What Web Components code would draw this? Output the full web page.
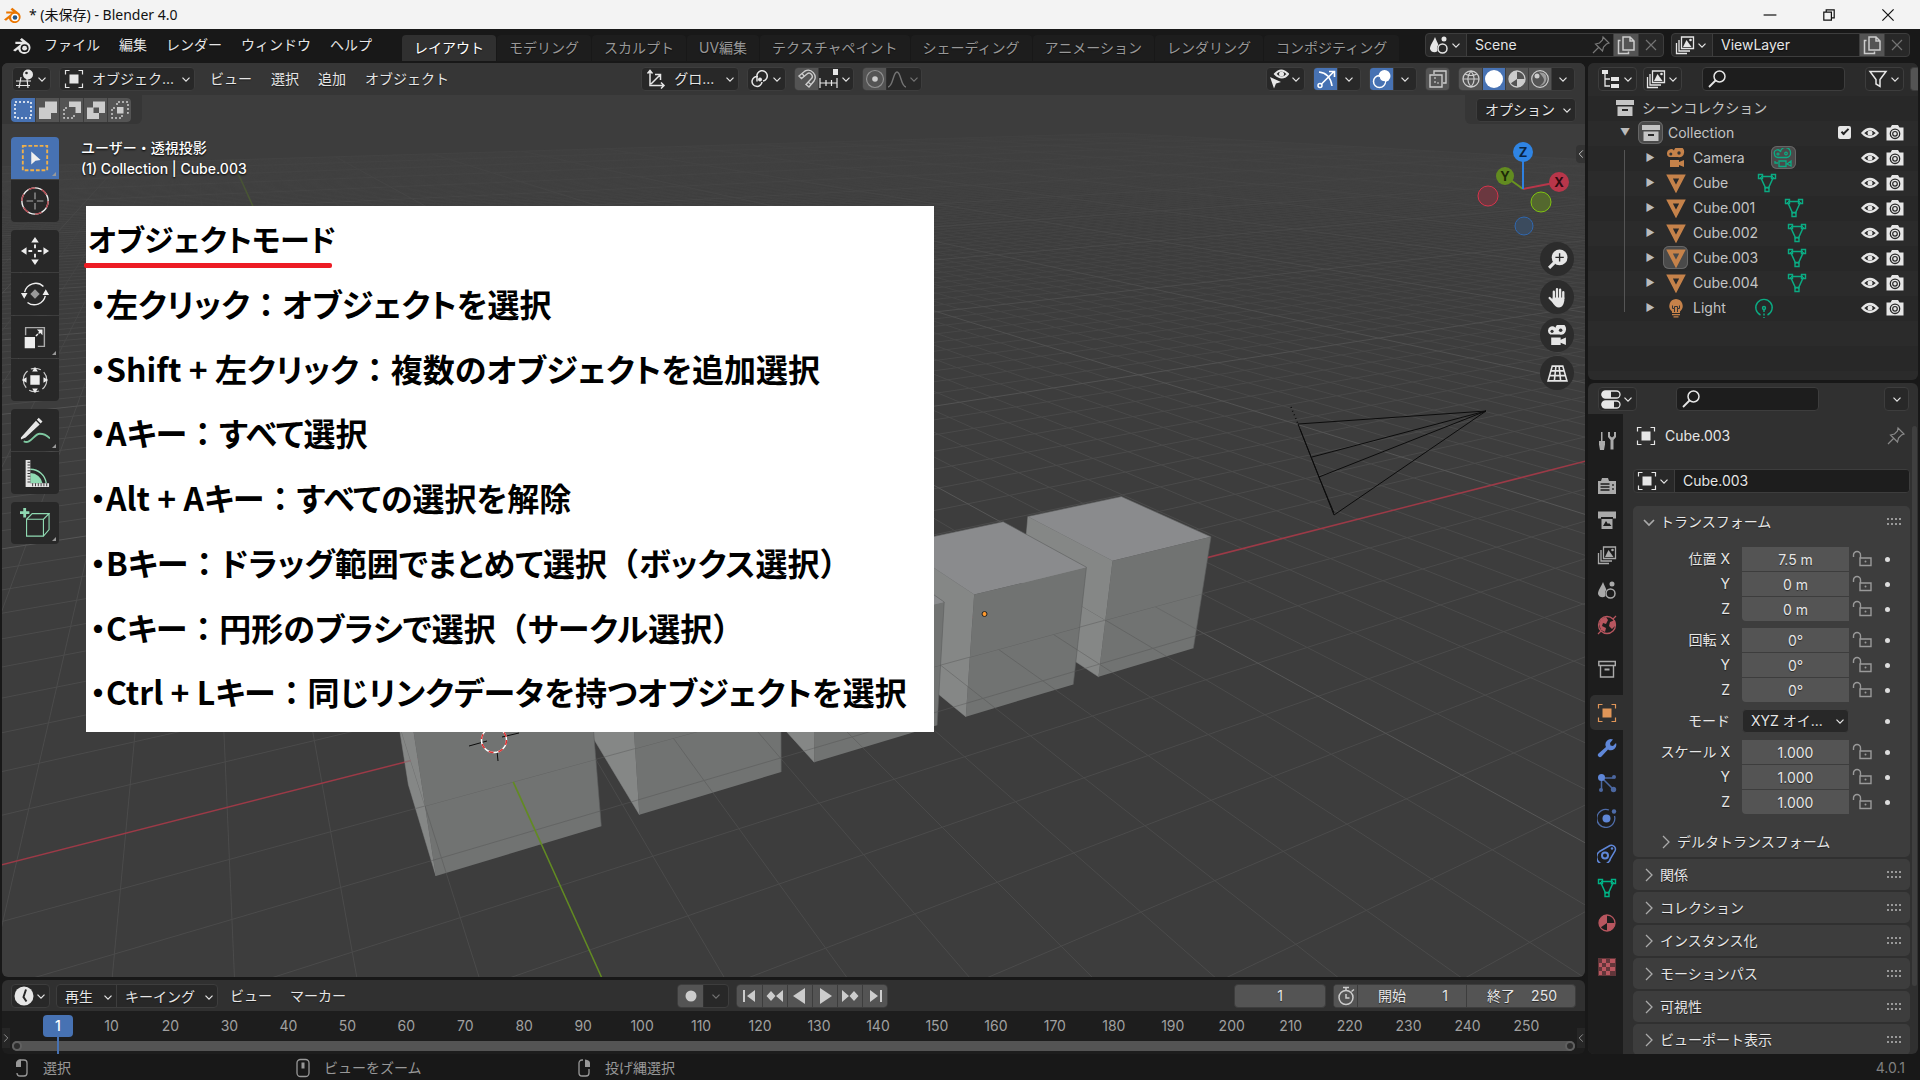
<!DOCTYPE html>
<html lang="ja">
<head>
<meta charset="utf-8">
<title>* (未保存) - Blender 4.0</title>
<style>
:root {
  --font: Inter, "Noto Sans CJK JP", sans-serif;
  --base: #181818;
  --dark: #1d1d1d;
  --button: #282828;
  --field: #545454;
  --header: #303030;
  --outline: #3d3d3d;
  --text: #e6e6e6;
  --accent: #4772b3;
  --orange: #e19658;
  --green: #00b386;
}
body {
  margin: 0;
  background: var(--base);
  color: var(--text);
  font: 14px/20px var(--font);
}
</style>
</head>
<body>
<blender-window></blender-window>
<script>
// 20x20 glyphs, drawn with the current text colour
var line = (d, w = 1.5, more = "") => `<path d="${d}" fill="none" stroke="currentColor" stroke-width="${w}" ${more}/>`;
var fill = (d, more = "") => `<path d="${d}" fill="currentColor" ${more}/>`;
var ring = (x, y, r, w = 1.5) => `<circle cx="${x}" cy="${y}" r="${r}" fill="none" stroke="currentColor" stroke-width="${w}"/>`;
var dot = (x, y, r) => `<circle cx="${x}" cy="${y}" r="${r}" fill="currentColor"/>`;

var reel = fill("M1 5a4 4 0 0 1 7-2.500a5 5 0 0 1 10 2.500a4.500 4.500 0 0 1-6 4H3a4 4 0 0 1-2-4zM4 12h9v2l5-2v7l-5-2v2H4z");
var logo = (eye) => `
  <path d="M1 14.500L8.500 8.500H3.200V6.500H10L7.500 4.500L9.300 2.800L16.500 8.500A6 6 0 1 1 5.800 13.500L3 15.700z" fill="currentColor"/>
  <circle cx="12" cy="12.500" r="3.800" fill="${eye[0]}"/><circle cx="12" cy="12.500" r="2.300" fill="${eye[1]}"/>`;

var icons = {
  logo: logo(["#181818", "#e6e6e6"]),
  brand: logo(["#fff", "#265787"]),
  down: line("M5 8l5 5L15 8", 1.700),
  right: line("M7 4l6 6l-6 6", 1.300),
  left: line("M13 4l-6 6l6 6", 1.300),
  min: line("M2 10h16", 1.500),
  restore: line("M3.500 6.500h9.500v10H3.500zM6.500 6V3.500h10v10H13.500", 1.500),
  close: line("M3 3l14 14M17 3L3 17", 1.500),
  x: line("M5 5l10 10M15 5L5 15", 1.200),
  view: line("M1 12h15M1 16.500h14M6 8l-2 11M12 10l1 9", 1.200) + dot(13, 5.500, 5) + `<circle cx="11.500" cy="4" r="1.300" fill="#282828"/>`,
  object: fill("M5.500 5.500h9v9h-9z") + line("M1.500 5.500v-4h4M14.500 1.500h4v4M18.500 14.500v4h-4M5.500 18.500h-4v-4", 1.200),
  orient: line("M4 1.500v15h14M1.500 4.500L4 1.500l2.500 3M15 13.500l3 3l-3 3M5 15L14 6M9 5.500h5.500V11", 1.500),
  pivot: line("M8 7.500a5 5 0 1 0 4 5.500M7 12.500V8a5.200 5.200 0 1 1 6 4", 1.500) + dot(10, 10.500, 2),
  magnet: line("M2 7l6-5a7 7 0 0 1 9 10l-5 6l-3-2.500l5-5.500a3.200 3.200 0 0 0-4-5L4.500 9.500z", 1.400) + line("M5 4.500l2.500 3M14 15.500l-3-2.500", 1.200),
  snap: line("M1 9v10M7 11v6M12.500 11v6M18 9v10M1 14h17", 1.200) + fill("M14 0h5v6h-5z"),
  falloff: `<g opacity=".5">` + ring(10, 10, 8.500, 1.200) + "</g>" + dot(10, 10, 2.800),
  curve: line("M1 18c5 0 5-15 9-15s4 15 9 15", 1.500),
  visible: `<path d="M6 5q6-7 13 0q-6 7-13 0z" fill="none" stroke="currentColor" stroke-width="2"/>` + dot(12.500, 5, 2.500) + fill("M1 8l11 5l-5 1.500l-2 5z"),
  gizmo: line("M3 3q11 1 13 14M5 15.500L17.500 3M13 2.500h5.500V8", 1.600) + ring(4, 16.500, 2, 1.500),
  overlay: dot(12.500, 7, 6) + ring(7.500, 12.500, 6, 1.500) + `<path d="M7 8a6 6 0 0 0 6 5" fill="none" stroke="#4772b3" stroke-width="1.500"/>`,
  xray: line("M2 6h12v12H2zM6 5V2h12v12h-3", 1.400) + line("M7 8v6h5", 1.200, 'stroke-dasharray="2 2"'),
  wire: ring(10, 10, 8, 1.300) + line("M2 10h16M10 2c-4 5-4 11 0 16M10 2c4 5 4 11 0 16M4 5q6 3 12 0", 1.200),
  solid: dot(10, 10, 9),
  shaded: ring(10, 10, 8, 1.300) + fill("M10 10V2a8 8 0 0 0-6.500 12.500zM10 10h8a8 8 0 0 1-8 8z"),
  rendered: ring(10, 10, 8.300, 1.200) + fill("M9 3.500q8-1 7.500 6.500q-1 6-7 7q6-4 4-8q-2-3-4.500-5.500z", 'opacity=".6"') + dot(7, 7, 2.500),
  pin: line("M12 2l6 6l-2.500 1l-3 3l-1 4l-7-7l4-1l3-3zM7.500 12.500L2 18", 1.200),
  copy: line("M7 2h7l4 4v9H7zM14 2v4h4", 1.500) + line("M4.500 5.500H2.500v13h10v-2", 1.500),
  scene: fill("M6 2c2 5 4 8 4 11c-1 6-8 5-9 1c0-4 3-7 5-12zM15 1.500a2.500 2.500 0 1 1 0 5a2.500 2.500 0 0 1 0-5z") + `<circle cx="13.500" cy="13.500" r="5.500" fill="var(--icon-back, #282828)"/>` + ring(13.500, 13.500, 4.500, 1.500),
  layers: line("M6.500 2h12v11.500h-12zM4 5v11h11M1.500 8v10.500H12", 1.300) + fill("M8 12l3.500-7l5 7z") + dot(15.500, 5, 1.300),
  outliner: fill("M1 1h6v4H1zM10 8h8v4h-8zM10 15h8v4h-8z") + line("M4 5v12h5M4 10h5", 1.300),
  search: ring(12.500, 7.500, 5.500, 1.500) + line("M8.500 11.500L2 18", 1.800),
  filter: line("M2 2.500h16l-6 8v7l-4-2.500v-4.500z", 1.500),
  archive: fill("M1 2h18v5H1zM2.500 8.500h15V18h-15z") + `<path d="M7 11h6v2H7z" fill="#282828"/>`,
  archive2: line("M1.800 2.500h16.500v4H1.800zM3.500 6.500h13v11.500h-13z", 1.400) + fill("M7.500 9.500h5v2h-5z"),
  eye: `<path d="M2.500 10Q10 2 17.500 10Q10 18 2.500 10z" fill="none" stroke="currentColor" stroke-width="2.300"/>` + dot(10, 10, 2.500),
  photo: fill("M1.500 4.500h4l1.500-2.500h6l1.500 2.500h4v13h-17z") + `<circle cx="10" cy="10.800" r="4.700" fill="none" stroke="#282828" stroke-width="1.300"/><circle cx="10" cy="10.800" r="2.300" fill="none" stroke="#282828" stroke-width="1.200"/>`,
  movie: reel + `<g fill="#333"><circle cx="4.800" cy="6" r="1.500"/><circle cx="13" cy="5" r="1.700"/></g>`,
  movieline: line("M1.500 6a3 3 0 0 1 6-2a4.500 4.500 0 0 1 10 1a4 4 0 0 1-4 4.500H5a3.300 3.300 0 0 1-3.500-3.500zM6 13h7v5.500H6zM14 16l4-3v5zM2 13v2h3", 1.300) + ring(5, 6, 1, 1.200) + ring(13, 5.500, 1.300, 1.200),
  cube: `<path d="M3.500 3.500h13L10 16z" fill="none" stroke="currentColor" stroke-width="4"/>`,
  mesh: line("M3.500 4L9 16M16.500 4L11 16M4 3.500h12", 1.500) + line("M1.500 1.500h4v4h-4zM14.500 1.500h4v4h-4zM8 14.500h4v4H8z", 1.400),
  bulb: fill("M10 1a7 7 0 0 1 4 12.500V15H6v-1.500A7 7 0 0 1 10 1zM6 16h8v1.200H6zM7.500 18.300h5v1.200h-5z") + `<path d="M6.500 7.500v3h2V8.500h3v2h2v-3M8.500 10.500V14M11.500 10.500V14" fill="none" stroke="#333" stroke-width="1"/>`,
  lamp: line("M6.500 17A8.200 8.200 0 1 1 13.500 17", 1.400) + ring(10, 10, 1.500, 1.400) + line("M10 12v8", 1.500, 'stroke-dasharray="2 1.500"'),
  tools: fill("M4 1h1.500v9H8v3.500l-1 5.500H3l-1-5.500V10h2zM11 1v5l2.500 3v9.500h3V9L19 6V1h-2v4l-2 1.500L13 5V1z"),
  render: fill("M1 6h3l1-3h6l1 3h7v13H1z") + `<path d="M3.500 9h9M3.500 12h9M3.500 15h9M16 9v2M16 13v2" stroke="#1d1d1d" stroke-width="1.300"/>`,
  output: fill("M1 1.500h18v7h-3V7H4v1.500H1zM4.500 9h11v10h-11z") + `<path d="M6 16l3-5l2 3l1-1l2.500 3z" fill="#1d1d1d"/>`,
  world: ring(10, 10, 8.500, 1.300) + fill("M4 4l5-2l2 3l-2 4l-3-1l-1 3l4 2l-1 4l-4-2l-2-6zM13 7l5-2l1 5l-4 4l-3-3z") + line("M1 19l3-3M16 4l3-3", 1.200),
  wrench: fill("M1.500 15.500L9 9a5.500 5.500 0 0 1 7-7.500L13 5l.500 2.500L16 8l3-3a5.500 5.500 0 0 1-8 6.500L4.500 18.500a2.100 2.100 0 0 1-3-3z"),
  particles: dot(4.500, 4.500, 3.500) + `<g opacity=".7">` + dot(17, 4, 2) + dot(4, 17, 2) + dot(16.500, 16.500, 2.700) + line("M5 5h11M4.500 5v12M5 5l11 11") + "</g>",
  physics: dot(9.500, 10.500, 4) + `<g opacity=".75">` + line("M12 2a9 9 0 1 0 5.500 6", 1.300) + dot(17, 3.500, 2.200) + "</g>",
  constraint: line("M2.500 8.500L13 2.500a4 4 0 0 1 5 5.500L13.500 15.500A7 7 0 1 1 2.500 8.500z", 1.500) + ring(8, 12.500, 3, 2) + dot(15, 5.500, 1.200),
  checker: fill("M1 1h18v18H1z", 'opacity=".45"') + fill("M5 2h4v4H5zM13 2h5v4h-5zM2 6h3v4H2zM9 6h4v4H9zM5 10h4v4H5zM13 10h5v4h-5zM2 14h3v4H2zM9 14h4v4H9z"),
  lock: line("M8 9h11v7.500H8zM1.500 8V6a3.500 3.500 0 0 1 7 0v3", 1.400) + dot(13.500, 12.500, 1),
  props: `<rect x="1" y="2" width="18" height="7" rx="3.500" fill="none" stroke="currentColor" stroke-width="1.300"/><rect x="1" y="12" width="18" height="7" rx="3.500" fill="none" stroke="currentColor" stroke-width="1.300"/>` + fill("M4 2h6v7H4a3 3 0 0 1 0-7zM4 12h9v7H4a3 3 0 0 1 0-7z"),
  clock: dot(10, 10, 9.500) + `<path d="M12 3.500L9.500 11l3 4.500" fill="none" stroke="#282828" stroke-width="2"/>`,
  stopwatch: ring(10, 11.500, 7, 1.500) + line("M10 8v4h3.500M7 1.500h6M10 2v3M15.500 5.500L18 3.500", 1.500),
  record: dot(10, 10, 5.500),
  first: fill("M3 4h2v12H3zM15 4v12l-8-6z"),
  prevkey: fill("M6 5l4.500 5L6 15L1.500 10zM18 4v12l-7-6z"),
  prev: fill("M15 2v16L3 10z"),
  play: fill("M5 2v16l12-8z"),
  nextkey: fill("M14 5l4.500 5l-4.500 5L9.500 10zM2 4v12l7-6z"),
  last: fill("M15 4h2v12h-2zM5 4v12l8-6z"),
  mouseL: line("M5 5a3 3 0 0 1 3-3h4a3 3 0 0 1 3 3v10a3 3 0 0 1-3 3H8a3 3 0 0 1-3-3", 1.300) + fill("M4 9V5q0-3 5-3.500V9z"),
  mouseM: `<rect x="4" y="1.500" width="12" height="17" rx="3.500" fill="none" stroke="currentColor" stroke-width="1.300"/>` + fill("M8.500 4.500h3v6h-3z"),
  mouseR: line("M15 11v4a3 3 0 0 1-3 3H8a3 3 0 0 1-3-3V5a3 3 0 0 1 3-3h1", 1.300) + fill("M16 9V5q0-3-5-3.500V9z"),
  selset: line("M2 2h16v16H2z", 1.500, 'stroke-dasharray="2 2"'),
  seladd: fill("M7 1.500h12V13h-6v6H1V7.500h6z"),
  selsub: fill("M7 1.500h12V13h-5.500V7H7z") + line("M5 8H2v10h10v-3", 1.500, 'stroke-dasharray="2 2"'),
  seldiff: fill("M7 1.500h12V13h-6v6H1V7.500h6zM7.500 7.500V13H13V7.500z", 'fill-rule="evenodd"'),
  seland: fill("M7 7h6.500v6.500H7z") + line("M7 5V2h11v11h-3M5 8H2v10h10v-3", 1.500, 'stroke-dasharray="2 2"'),
  zoom: dot(12, 8, 7.500) + line("M7 13L2 18", 3) + `<path d="M12 4v8M8 8h8" stroke="#2a2a2a" stroke-width="1.300"/>`,
  hand: line("M6.500 11V4.500M9.500 10V2M12.500 10V2.500M15.500 11V5M7 15L2.500 10.500", 2.200, 'stroke-linecap="round"') + fill("M5.500 10h11v3q-1 6-5 6.500q-4 0-7-6.500z"),
  grid: line("M5 3h10l4 14H1zM4 7.500h12M3 12h14M8.500 3L7 17M11.500 3L13 17", 1.500),
};

// 32x32 glyphs for the tool shelf
var toolIcons = {
  select: `<rect x="3" y="3" width="26" height="26" fill="none" stroke="#f0b04a" stroke-width="2" stroke-dasharray="4 2"/><path d="M12 9l10 9l-5.500 1L12 23z" fill="#eee"/>`,
  cursor: `<circle cx="16" cy="16" r="14" fill="none" stroke="#eee" stroke-width="1.500"/><circle cx="16" cy="16" r="14" fill="none" stroke="#b0454c" stroke-width="1.500" stroke-dasharray="7.300 7.300"/><path d="M16 7v7M16 18v7M7 16h7M18 16h7" stroke="#aaa" stroke-width="1.200"/>`,
  move: `<path d="M16 1l4 6h-8zM16 31l4-6h-8zM1 16l6-4v8zM31 16l-6-4v8z" fill="#eee"/><path d="M16 9v4M16 19v4M9 16h4M19 16h4" stroke="#eee" stroke-width="2"/>`,
  rotate: `<path d="M5 14A12 12 0 0 1 25 8M27 18A12 12 0 0 1 8 25" fill="none" stroke="#eee" stroke-width="1.500"/><path d="M1 15h7l-3.500 6zM24 17h7l-3.500-6z" fill="#eee"/><path d="M16 11l5 5l-5 5l-5-5z" fill="#999"/>`,
  scale: `<path d="M6 14V6h20v20h-7" fill="none" stroke="#aaa" stroke-width="1.500"/><path d="M5 16h11v12H5z" fill="#eee"/><path d="M17 15l5-5" stroke="#eee" stroke-width="1.500" stroke-dasharray="3 1"/><path d="M24 8v6l-6-6z" fill="#eee"/>`,
  transform: `<circle cx="16" cy="16" r="12.500" fill="none" stroke="#ccc" stroke-width="1.300" stroke-dasharray="11 4 11 4 9 0"/><path d="M11 11h10v10H11zM16 2l3 5h-6zM16 30l3-5h-6zM2 16l5-3v6zM30 16l-5-3v6z" fill="#eee"/>`,
  annotate: `<path d="M1 24L17 6l4 4L6 24l-5 2zM18 5l2-2l4 4l-2 2z" fill="#e6e6e6"/><path d="M4 28c7 4 11-8 17-8q6 0 11 5" fill="none" stroke="#7ec8a0" stroke-width="2"/>`,
  measure: `<path d="M11 12a17 17 0 0 1 17 15" fill="none" stroke="#8fdab2" stroke-width="1.500"/><path d="M11 16a13 13 0 0 1 13 11H11z" fill="#8fdab2"/><path d="M6 2h5v25h20v4H6z" fill="#e6e6e6"/><path d="M9.500 4v22M13 28.500h17" stroke="#333" stroke-width="3" stroke-dasharray="1 2"/>`,
  add: `<path d="M7 12h18v18H7zM7 12l6-6h18l-6 6M31 6v17l-6 7" fill="none" stroke="#8fdab2" stroke-width="1.200"/><path d="M5 0v10M0 5h10" stroke="#8fdab2" stroke-width="3"/>`,
};

var shared = `
*, *::before { box-sizing: border-box; }
button, select, input {
  margin: 0; padding: 0; border: 0; background: none;
  color: inherit; font: inherit; outline: 0;
  text-shadow: 0 1px 1px #0008;
}
button { display: flex; align-items: center; justify-content: center; }
.row { display: flex; align-items: center; }
.group {
  display: flex; height: 24px; overflow: hidden;
  border: 1px solid var(--outline); border-radius: 4px; background: var(--button);
}
.group > * + * { border-left: 1px solid var(--outline); }
.group button { min-width: 23px; }
.group .lit { background: var(--field); color: #ccc; }
.group .on { background: var(--accent); color: #fff; }
.dim { opacity: .4; }
`;

class UiElement extends HTMLElement {
  constructor() {
    super();
    this.attachShadow({ mode: "open" });
  }

  connectedCallback() {
    this.shadowRoot.innerHTML = `<style>${shared}${this.constructor.css || ""}</style>${this.render()}`;
  }
}

class UiIcon extends UiElement {
  static css = `
    :host { display: inline-block; width: 20px; height: 20px; flex: none; }
    svg { display: block; width: 100%; height: 100%; }
  `;
  render() {
    return `<svg viewBox="0 0 20 20">${icons[this.getAttribute("name")]}</svg>`;
  }
}

// icon button that opens a menu
class UiDrop extends UiElement {
  static css = `
    :host { display: block; flex: none; }
    .group { width: 39px; }
    button { flex: 1; }
    .arrow { width: 14px; height: 14px; }
  `;
  render() {
    var name = this.getAttribute("icon");
    return `<div class="group"><button aria-label="${name}"><ui-icon name="${name}"></ui-icon><ui-icon class="arrow" name="down"></ui-icon></button></div>`;
  }
}

class UiSelect extends UiElement {
  static css = `
    :host { display: block; }
    .group { position: relative; align-items: center; padding-left: 4px; }
    :host([icon=""]) .group, :host(:not([icon])) .group { padding-left: 8px; }
    :host([plain]) .group { border: 0; border-radius: 0; background: none; }
    .lead { margin-right: 8px; }
    select { appearance: none; flex: 1; min-width: 0; padding-right: 16px; border: 0 !important; }
    .arrow { position: absolute; right: 1px; width: 14px; height: 14px; border: 0 !important; pointer-events: none; }
    option { background: #181818; }
  `;
  render() {
    var icon = this.getAttribute("icon");
    return `<div class="group">
      ${icon ? `<ui-icon class="lead" name="${icon}"></ui-icon>` : ""}
      <select aria-label="${this.getAttribute("label")}"><option>${this.textContent}</option></select>
      <ui-icon class="arrow" name="down"></ui-icon>
    </div>`;
  }
}

class UiSearch extends UiElement {
  static css = `
    :host { display: block; width: 143px; }
    label { display: flex; align-items: center; height: 24px; padding: 0 4px; border: 1px solid var(--outline); border-radius: 4px; background: var(--dark); }
    input { width: 100%; }
  `;
  render() {
    return `<label><ui-icon name="search"></ui-icon><input type="text" aria-label="検索"></label>`;
  }
}

// data-block picker: type menu, name, new, unlink
class UiDatablock extends UiElement {
  static css = `
    :host { display: block; }
    .group button { flex: none; width: 25px; }
    .group .type { width: 40px; }
    .type .arrow { width: 14px; height: 14px; }
    input { flex: 1; width: 100%; min-width: 0; padding-left: 8px; background: var(--dark); }
    .pin { background: var(--dark); border: 0; color: #777; }
  `;
  render() {
    var full = !this.hasAttribute("simple");
    return `<div class="group">
      <button class="type" aria-label="type"><ui-icon name="${this.getAttribute("icon")}"></ui-icon><ui-icon class="arrow" name="down"></ui-icon></button>
      <input type="text" aria-label="name" value="${this.getAttribute("value")}">
      ${this.hasAttribute("pin") ? `<button class="pin" aria-label="pin"><ui-icon name="pin"></ui-icon></button>` : ""}
      ${full ? `<button class="lit" aria-label="new"><ui-icon name="copy"></ui-icon></button><button aria-label="unlink"><ui-icon class="dim" name="x"></ui-icon></button>` : ""}
    </div>`;
  }
}

class TitleBar extends UiElement {
  static css = `
    :host { display: flex; align-items: center; height: 29px; padding: 0 24px 0 3px; background: #f3f3f3; color: #111; font-family: "Noto Sans", "Noto Sans CJK JP", sans-serif; }
    span { margin-left: 6px; }
    .brand { color: #ea7600; }
    nav { display: flex; gap: 43px; margin-left: auto; }
    nav button { text-shadow: none; }
    nav ui-icon { width: 16px; height: 16px; }
  `;
  render() {
    return `<ui-icon class="brand" name="brand"></ui-icon><span>* (未保存) - Blender 4.0</span>
    <nav>${["min", "restore", "close"].map(n => `<button aria-label="${n}"><ui-icon name="${n}"></ui-icon></button>`).join("")}</nav>`;
  }
}

class TopBar extends UiElement {
  static css = `
    :host { display: flex; height: 34px; padding: 0 10px 0 12px; align-items: flex-start; }
    .logo { width: 21px; height: 21px; margin-top: 6px; }
    .menus { gap: 19px; height: 32px; padding: 0 30px 0 11px; }
    .tabs { display: flex; flex: 1; gap: 1px; min-width: 0; overflow: hidden; padding-top: 6px; }
    .tabs button { height: 26px; padding: 0 12px; border-radius: 4px 4px 0 0; background: var(--dark); color: #989898; white-space: nowrap; }
    .tabs .on { background: var(--header); color: #fff; }
    ui-datablock { margin: 4px 0 0 7px; width: 239px; }
  `;
  render() {
    var menus = ["ファイル", "編集", "レンダー", "ウィンドウ", "ヘルプ"];
    var tabs = ["レイアウト", "モデリング", "スカルプト", "UV編集", "テクスチャペイント", "シェーディング", "アニメーション", "レンダリング", "コンポジティング"];
    return `<ui-icon class="logo" name="logo"></ui-icon>
    <div class="menus row">${menus.map(m => `<button>${m}</button>`).join("")}</div>
    <div class="tabs">${tabs.map((t, i) => `<button class="${i ? "" : "on"}">${t}</button>`).join("")}</div>
    <ui-datablock icon="scene" value="Scene" pin></ui-datablock>
    <ui-datablock icon="layers" value="ViewLayer"></ui-datablock>`;
  }
}

// perspective of the scene: a row of cubes standing on the 1 m floor grid
class SceneView extends UiElement {
  static css = `
    :host { display: block; position: absolute; inset: 0; }
    svg { display: block; width: 100%; height: 100%; }
  `;

  depth(x, y, z) {
    return 13.64 + 0.4216 * x + 0.826 * y - 0.3741 * z;
  }

  project(x, y, z) {
    var right = -3.7456 + 0.8937 * x - 0.4526 * y;
    var up = -2.744 + 0.1725 * x + 0.3332 * y + 0.917 * z;
    var d = this.depth(x, y, z);
    return [791.5 + 1090.5 * right / d, 457 - 1090.5 * up / d].map(n => n.toFixed(1)).join(" ");
  }

  // floor line at x = k or y = k, cut where it passes behind the viewer
  floorLine(axis, k, far) {
    var near = axis == "x" ? (-12.6 - 0.4216 * k) / 0.826 : (-12.6 - 0.826 * k) / 0.4216;
    var from = Math.max(near, -far);
    var points = [from, far].map(t => axis == "x" ? this.project(k, t, 0) : this.project(t, k, 0));
    return `M${points.join("L")}`;
  }

  grid() {
    var minor = "";
    var major = "";
    for (var k = -80; k <= 120; k++) {
      if (k == 0) continue;
      var d = "";
      if (this.depth(k, 120, 0) > 1) d += this.floorLine("x", k, 120);
      if (this.depth(120, k, 0) > 1) d += this.floorLine("y", k, 120);
      if (k % 10) minor += d;
      else major += d;
    }
    return `
      <path d="${minor}" stroke="#4b4b4b"/>
      <path d="${major}" stroke="#575757"/>
      <path d="${this.floorLine("y", 0, 120)}" stroke="#9c3a47" stroke-width="1.5"/>
      <path d="${this.floorLine("x", 0, 120)}" stroke="#628b22" stroke-width="1.5"/>`;
  }

  cube(cx) {
    var [l, r] = [cx - 1, cx + 1];
    var poly = (...p) => "M" + p.map(c => this.project(...c)).join("L") + "Z";
    var under = poly([l, 1, -1], [l, -1, -1], [r, -1, -1], [r, -1, 0], [l, -1, 0], [l, 1, 0]);
    var id = "under" + cx * 10;
    return `
      <path d="${poly([l, 1, -1], [l, -1, -1], [l, -1, 1], [l, 1, 1])}" fill="#858786" stroke="#858786" stroke-width=".5"/>
      <path d="${poly([l, -1, -1], [r, -1, -1], [r, -1, 1], [l, -1, 1])}" fill="#717372"/>
      <path d="${poly([l, -1, 1], [r, -1, 1], [r, 1, 1], [l, 1, 1])}" fill="#8a8b8d"/>
      <path d="M${this.project(l, 1, 1)}L${this.project(r, 1, 1)}L${this.project(r, -1, 1)}L${this.project(r, -1, -1)}" fill="none" stroke="#5c5e5d" stroke-opacity=".6"/>
      <clipPath id="${id}"><path d="${under}"/></clipPath>
      <g clip-path="url(#${id})"><use href="#floor" opacity=".35"/>
      <path d="${this.floorLine("x", 0, 120)}" stroke="#628b22" stroke-width="1.5"/></g>`;
  }

  render() {
    return `<svg viewBox="0 0 1583 914" preserveAspectRatio="xMidYMid slice">
      <defs>
        <linearGradient id="haze" gradientUnits="userSpaceOnUse" x1="0" y1="0" x2="0" y2="914">
          <stop offset=".03" stop-color="#000"/><stop offset=".12" stop-color="#444"/>
          <stop offset=".3" stop-color="#bbb"/><stop offset=".45" stop-color="#fff"/>
        </linearGradient>
        <mask id="fade" maskUnits="userSpaceOnUse" x="0" y="0" width="1583" height="914"><path d="M0 0h1583v914H0z" fill="url(#haze)"/></mask>
      </defs>
      <path d="M-500 -500h3000v2000h-3000z" fill="#3d3d3d"/>
      <g mask="url(#fade)"><g id="floor" fill="none">${this.grid()}</g></g>
      ${[10, 7.5, 5, 2.5, 0].map(x => this.cube(x)).join("")}
      <g fill="none" stroke="#0c0c0c">
        <path d="M1296 361L1484 348L1310 394M1484 348L1317 414M1484 348L1332 452L1296 361M1298 366L1317 414L1332 450"/>
        <path d="M1289 344l7 17" stroke-dasharray="1 3" stroke-width="1.5"/>
        <path d="M467 683l18-5M500 674l17-4M495 688l1 10M492 661l-2-10"/>
      </g>
      <circle cx="492" cy="677" r="12.500" fill="none" stroke="#fff" stroke-width="1.500"/>
      <circle cx="492" cy="677" r="12.500" fill="none" stroke="#e03030" stroke-width="1.500" stroke-dasharray="5 5"/>
      <circle cx="982.500" cy="551" r="2.500" fill="#ff9a2e" stroke="#222"/>
    </svg>`;
  }
}

class AxisGizmo extends UiElement {
  static css = `
    :host { display: block; width: 100px; height: 101px; }
    text { font: bold 13px Inter, sans-serif; text-anchor: middle; }
  `;
  render() {
    return `<svg width="100" height="101">
      <g stroke-width="2"><path d="M50 52L86 45" stroke="#b8364a"/><path d="M50 52L32 39" stroke="#6a9420"/><path d="M50 52V15" stroke="#2f80e0"/></g>
      <circle cx="15" cy="59" r="10" fill="#6b3840" stroke="#d8344c"/>
      <circle cx="68" cy="65" r="10" fill="#54682e" stroke="#80c410"/>
      <circle cx="51" cy="89" r="9" fill="#3b4b5e" stroke="#3068b0"/>
      <circle cx="32" cy="39" r="9" fill="#628b20"/><circle cx="86" cy="45" r="10" fill="#b8364a"/><circle cx="50" cy="15" r="10" fill="#2f84e3"/>
      <text x="32" y="44" fill="#1d2a08">Y</text><text x="86" y="50" fill="#300a10">X</text><text x="50" y="20" fill="#0a2340">Z</text>
    </svg>`;
  }
}

class ToolShelf extends UiElement {
  static css = `
    :host { display: grid; gap: 8px; width: 48px; align-content: start; }
    div { display: grid; gap: 1px; border-radius: 4px; overflow: hidden; }
    button { position: relative; height: 42px; background: var(--button); }
    .on { background: var(--accent); }
    .more::after { content: ""; position: absolute; right: 3px; bottom: 3px; border: solid; border-width: 0 0 4px 4px; border-color: transparent transparent #999; }
    svg { width: 30px; height: 30px; }
  `;
  render() {
    var groups = [["select+", "cursor"], ["move", "rotate", "scale+", "transform"], ["annotate+", "measure"], ["add+"]];
    return groups.map(g => `<div>${g.map(t => {
      var name = t.replace("+", "");
      return `<button aria-label="${name}" class="${name == "select" ? "on" : ""} ${name == t ? "" : "more"}"><svg viewBox="0 0 32 32">${toolIcons[name]}</svg></button>`;
    }).join("")}</div>`).join("");
  }
}

class NoteCard extends UiElement {
  static css = `
    :host {
      display: flex; flex-direction: column; width: 848px; height: 526px; padding: 0 2px 8px;
      background: #fff; color: #000;
      font: bold 32px/64px "Noto Sans CJK JP", sans-serif; font-feature-settings: "palt"; white-space: nowrap;
    }
    h2 { position: relative; flex: 1; margin: 0; font: inherit; font-size: 30px; }
    h2::after { content: ""; position: absolute; left: -4px; bottom: 3px; width: 248px; height: 5px; border-radius: 2px; background: #ed1c24; }
    ul { flex: 7; display: flex; flex-direction: column; list-style: none; margin: 0; padding: 0; }
    ::slotted(li) { flex: 1; padding-left: 2px; }
  `;
  render() {
    return `<h2>${this.getAttribute("heading")}</h2><ul><slot></slot></ul>`;
  }
}

class View3d extends UiElement {
  static css = `
    :host { display: flex; flex-direction: column; position: relative; overflow: hidden; border-radius: 6px; min-height: 0; }
    header { position: relative; display: flex; align-items: center; height: 32px; padding: 0 10px; background: #363636; }
    header .row { gap: 8px; }
    .menus { padding-left: 15px; gap: 19px !important; }
    .s1 { flex: 19; } .s2 { flex: 34; }
    ui-select.mode { width: 136px; } ui-select.orient { width: 98px; }
    .settings { position: relative; display: flex; justify-content: space-between; height: 29px; }
    .bump { height: 29px; padding: 3px 11px 3px 9px; background: #363636; border-radius: 0 0 6px 0; }
    .bump + .bump { border-radius: 0 0 0 6px; padding: 3px 9px 3px 11px; }
    .bump + .bump ui-select { width: 100px; }
    .bump .group { border: 0; }
    .bump button { min-width: 24px; }
    .body { position: relative; display: flex; flex: 1; padding: 13px 10px 0 9px; }
    .info { margin: 0 0 0 22px; font-weight: 500; line-height: 21px; color: #fff; text-shadow: 0 1px 2px #000; }
    .arrow14 { width: 14px; height: 14px; }
    aside { margin-left: auto; display: flex; flex-direction: column; align-items: flex-end; gap: 4px; }
    axis-gizmo { margin: 0 2px 0 0; }
    aside button { width: 34px; height: 34px; margin-right: 1px; border-radius: 50%; background: #2c2c2c; }
    aside button ui-icon { width: 21px; height: 21px; }
    note-card { position: absolute; left: 84px; top: 143px; }
    li i { font-style: normal; font-feature-settings: normal; }
    .flap { position: absolute; right: 0; top: 82px; width: 9px; height: 18px; background: #333; border-radius: 4px 0 0 4px; }
    .flap ui-icon { width: 12px; height: 14px; }
  `;
  render() {
    var b = (name, cls = "") => `<button class="${cls}" aria-label="${name}"><ui-icon name="${name}"></ui-icon></button>`;
    var d = `<button aria-label="options"><ui-icon class="arrow14" name="down"></ui-icon></button>`;
    return `<scene-view></scene-view>
    <header>
      <div class="row"><ui-drop icon="view"></ui-drop><ui-select class="mode" icon="object" label="mode">オブジェク...</ui-select></div>
      <div class="row menus"><button>ビュー</button><button>選択</button><button>追加</button><button>オブジェクト</button></div>
      <span class="s1"></span>
      <div class="row">
        <ui-select class="orient" icon="orient" label="orientation">グロ...</ui-select>
        <ui-drop icon="pivot"></ui-drop>
        <div class="group">${b("magnet", "lit")}<button aria-label="snap"><ui-icon name="snap"></ui-icon><ui-icon class="arrow14" name="down"></ui-icon></button></div>
        <div class="group">${b("falloff", "lit")}<button class="dim" aria-label="curve"><ui-icon name="curve"></ui-icon><ui-icon class="arrow14" name="down"></ui-icon></button></div>
      </div>
      <span class="s2"></span>
      <div class="row">
        <ui-drop icon="visible"></ui-drop>
        <div class="group">${b("gizmo", "on")}${d}</div>
        <div class="group">${b("overlay", "on")}${d}</div>
        <div class="group">${b("xray", "lit")}</div>
        <div class="group">${b("wire", "lit")}${b("solid", "on")}${b("shaded", "lit")}${b("rendered", "lit")}${d}</div>
      </div>
    </header>
    <div class="settings">
      <div class="bump"><div class="group">${b("selset", "on")}${["seladd", "selsub", "seldiff", "seland"].map(n => b(n, "lit")).join("")}</div></div>
      <div class="bump"><ui-select label="options">オプション</ui-select></div>
    </div>
    <div class="body">
      <tool-shelf></tool-shelf>
      <p class="info">ユーザー・透視投影<br>(1) Collection | Cube.003</p>
      <aside><axis-gizmo></axis-gizmo>${["zoom", "hand", "movie", "grid"].map(n => b(n)).join("")}</aside>
    </div>
    <button class="flap" aria-label="sidebar"><ui-icon name="left"></ui-icon></button>
    <note-card heading="オブジェクトモード">
      <li>・左クリック<i>：</i>オブジェクトを選択</li>
      <li>・Shift + 左クリック<i>：</i>複数のオブジェクトを追加選択</li>
      <li>・Aキー<i>：</i>すべて選択</li>
      <li>・Alt + Aキー<i>：</i>すべての選択を解除</li>
      <li>・Bキー<i>：</i>ドラッグ範囲でまとめて選択<i>（</i>ボックス選択<i>）</i></li>
      <li>・Cキー<i>：</i>円形のブラシで選択<i>（</i>サークル選択<i>）</i></li>
      <li>・Ctrl + Lキー<i>：</i>同じリンクデータを持つオブジェクトを選択</li>
    </note-card>`;
  }
}

class TimeLine extends UiElement {
  static css = `
    :host { display: block; position: relative; overflow: hidden; border-radius: 6px; background: var(--dark); }
    header { display: flex; align-items: center; height: 31px; padding: 0 9px; background: var(--header); }
    header .group ui-select:first-child { width: 59px; }
    header .group ui-select:nth-child(2) { width: 101px; }
    .menus { gap: 18px; padding-left: 6px; }
    .left { width: 666px; gap: 6px; flex: none; }
    .keys { gap: 7px; margin-right: auto; }
    .keys button { min-width: 25px; }
    .ends { gap: 7px; }
    .ends .group { background: var(--field); }
    .ends label { display: flex; width: 109px; padding: 0 18px 0 20px; align-items: center; }
    .ends label span { flex: none; text-shadow: 0 1px 1px #0008; }
    .ends label input { text-align: right; width: 100%; min-width: 0; }
    .now { width: 90px; text-align: center; }
    .arrow14 { width: 14px; height: 14px; }
    .ruler { display: flex; height: 30px; align-items: center; padding: 0 29px 0 41px; color: #a0a0a0; }
    .ruler b { position: relative; width: 30px; height: 22px; margin-right: 9px; border-radius: 4px; background: var(--accent); color: #fff; font-weight: 500; line-height: 22px; text-align: center; }
    .ruler b::after { content: ""; position: absolute; left: 14px; top: 22px; width: 2px; height: 18px; background: var(--accent); }
    ol { display: grid; grid-template-columns: repeat(25, 1fr); flex: 1; list-style: none; margin: 0; padding: 0; text-align: center; }
    .bar { display: flex; justify-content: space-between; height: 10px; margin: 0 10px; border-radius: 5px; background: var(--field); }
    .bar i { width: 10px; height: 10px; border-radius: 5px; border: 2px solid #606060; background: #2c2c2c; }
    .flap { position: absolute; top: 48px; left: 0; width: 8px; height: 20px; background: #262626; }
    .flap.r { left: auto; right: 0; }
    .flap ui-icon { width: 12px; height: 14px; color: #aaa; }
  `;
  render() {
    var frames = Array.from({ length: 25 }, (_, i) => `<li>${(i + 1) * 10}</li>`).join("");
    var b = (name) => `<button class="lit" aria-label="${name}"><ui-icon name="${name}"></ui-icon></button>`;
    return `<header>
      <div class="row left">
        <ui-drop icon="clock"></ui-drop>
        <div class="group"><ui-select plain label="playback">再生</ui-select><ui-select plain label="keying">キーイング</ui-select></div>
        <div class="row menus"><button>ビュー</button><button>マーカー</button></div>
      </div>
      <div class="row keys">
        <div class="group">${b("record")}<button class="dim" aria-label="auto key"><ui-icon class="arrow14" name="down"></ui-icon></button></div>
        <div class="group">${["first", "prevkey", "prev", "play", "nextkey", "last"].map(b).join("")}</div>
      </div>
      <div class="row ends">
        <div class="group"><input class="now" type="text" aria-label="frame" value="1"></div>
        <div class="group">${b("stopwatch")}<label><span>開始</span><input type="text" value="1"></label><label><span>終了</span><input type="text" value="250"></label></div>
      </div>
    </header>
    <div class="ruler"><b>1</b><ol>${frames}</ol></div>
    <div class="bar"><i></i><i></i></div>
    <button class="flap" aria-label="channels"><ui-icon name="right"></ui-icon></button>
    <button class="flap r" aria-label="sidebar"><ui-icon name="left"></ui-icon></button>`;
  }
}

class OutlinerRow extends UiElement {
  static css = `
    :host { display: flex; align-items: center; height: 25px; padding-right: 13px; color: #c4c4c4; }
    .tri { width: 12px; font-size: 10px; line-height: 25px; text-align: center; color: #bbb; flex: none; }
    .box { display: grid; place-items: center; width: 25px; height: 23px; margin: 0 5px 0 7px; border-radius: 6px; flex: none; }
    .active { background: #4a4a4a; box-shadow: inset 0 0 0 1px #666; }
    .obj { color: #c5824a; }
    .data { color: #0bab83; margin-left: 26px; }
    .end { display: flex; align-items: center; gap: 5px; margin-left: auto; color: #e6e6e6; }
    input { appearance: none; width: 13px; height: 13px; margin-right: 4px; border-radius: 2px; background: #e6e6e6; display: grid; place-items: center; }
    input::before { content: ""; width: 8px; height: 4px; border: solid #222; border-width: 0 0 2px 2px; transform: rotate(-45deg); margin-bottom: 3px; }
  `;
  render() {
    var kind = this.getAttribute("kind");
    var root = kind == "root";
    var coll = kind == "collection";
    var indent = root ? 17 : coll ? 31 : 56;
    var icon = { root: "archive", collection: "archive", camera: "movie", mesh: "cube", light: "bulb" }[kind];
    var data = { camera: "movieline", mesh: "mesh", light: "lamp" }[kind];
    var active = coll || this.hasAttribute("active") ? "active" : "";
    return `<span style="width: ${indent}px"></span>
      ${root ? "" : `<span class="tri">${coll ? "▼" : "▶"}</span>`}
      <span class="box ${active} ${data ? "obj" : ""}"><ui-icon name="${icon}"></ui-icon></span>
      <slot></slot>
      ${data ? `<span class="box data ${kind == "camera" ? "active" : ""}"><ui-icon name="${data}"></ui-icon></span>` : ""}
      ${root ? "" : `<span class="end">${coll ? `<input type="checkbox" checked aria-label="exclude">` : ""}
      <ui-icon name="eye"></ui-icon><ui-icon name="photo"></ui-icon></span>`}`;
  }
}

class OutlinerPanel extends UiElement {
  static css = `
    :host { display: block; overflow: hidden; border-radius: 6px; background: repeating-linear-gradient(#2b2b2b 0 25px, #282828 25px 50px) 0 8px; }
    header { display: flex; align-items: center; height: 32px; padding-left: 10px; background: #2b2b2b; gap: 6px; }
    ui-search { margin: 0 14px; }
    .cut { width: 8px; border-right: 0; border-radius: 4px 0 0 4px; background: var(--field); margin-left: auto; }
    .tree { position: relative; }
    .guide { position: absolute; left: 36px; top: 55px; width: 1px; height: 162px; background: #555; }
  `;
  render() {
    var rows = [["camera", "Camera"], ["mesh", "Cube"], ["mesh", "Cube.001"], ["mesh", "Cube.002"], ["mesh", "Cube.003"], ["mesh", "Cube.004"], ["light", "Light"]];
    return `<header><ui-drop icon="outliner"></ui-drop><ui-drop icon="layers"></ui-drop><ui-search></ui-search><ui-drop icon="filter"></ui-drop><div class="group cut"></div></header>
    <div class="tree">
      <outliner-row kind="root">シーンコレクション</outliner-row>
      <outliner-row kind="collection">Collection</outliner-row>
      ${rows.map(([kind, name]) => `<outliner-row kind="${kind}" ${name == "Cube.003" ? "active" : ""}>${name}</outliner-row>`).join("")}
      <span class="guide"></span>
    </div>`;
  }
}

class PropPanel extends UiElement {
  static css = `
    :host { display: block; border-radius: 5px; background: var(--outline); }
    header { display: flex; align-items: center; height: 31px; padding: 0 8px 0 6px; }
    header ui-icon { color: #aaa; }
    header button { gap: 1px; }
    .grip { width: 15px; height: 7px; margin-left: auto; background: radial-gradient(circle at 1px 1px, #999 1px, #0000 1px) 0 0 / 4px 5px; }
  `;
  render() {
    var open = this.hasAttribute("open");
    return `<header><button><ui-icon name="${open ? "down" : "right"}"></ui-icon>${this.getAttribute("heading")}</button><span class="grip"></span></header><slot></slot>`;
  }
}

// stack of X/Y/Z number fields under one label
class VectorField extends UiElement {
  static css = `
    :host { display: grid; gap: 1px; margin-bottom: 7px; }
    label { display: grid; grid-template-columns: 97px 107px 24px 1fr; align-items: center; height: 24px; }
    span { text-align: right; text-shadow: 0 1px 1px #0008; }
    input { height: 24px; margin-left: 12px; width: 107px; background: var(--field); text-align: center; }
    label:first-child input { border-radius: 4px 0 0 0; }
    label:last-child input { border-radius: 0 0 0 4px; }
    ui-icon { margin-left: 15px; color: #999; }
    i { width: 5px; height: 5px; margin-left: 24px; border-radius: 50%; background: #ddd; }
  `;
  render() {
    var label = this.getAttribute("label");
    return this.getAttribute("values").split(",").map((v, i) => `<label>
      <span>${i ? "" : label + " "}${"XYZ"[i]}</span><input type="text" value="${v}"><ui-icon name="lock"></ui-icon><i></i>
    </label>`).join("");
  }
}

class PropertiesPanel extends UiElement {
  static css = `
    :host { display: flex; flex-direction: column; min-height: 0; overflow: hidden; border-radius: 6px; background: var(--header); }
    .top { display: flex; align-items: center; height: 31px; flex: none; padding: 0 9px 0 10px; }
    .s1 { flex: 3; } .s2 { flex: 5; }
    .arrow14 { width: 14px; height: 14px; }
    .body { display: flex; flex: 1; min-height: 0; }
    nav { width: 35px; padding-top: 9px; background: var(--dark); color: #aaa; --icon-back: #1d1d1d; }
    nav button { width: 33px; height: 35px; margin-left: 2px; border-radius: 5px 0 0 5px; }
    nav .gap { margin-top: 9px; }
    nav .on { background: var(--header); color: var(--orange); }
    .blue { color: #5f87d8; } .green { color: var(--green); } .red { color: #b8565f; }
    main { flex: 1; padding: 0 0 0 10px; overflow: hidden; }
    .title { height: 44px; padding: 0 4px 0 3px; }
    .title span { margin-left: 9px; }
    .title .pin { margin-left: auto; color: #888; }
    ui-datablock { margin: 11px 0 13px; }
    prop-panel { margin-bottom: 2px; }
    .space { height: 10px; }
    .mode { display: grid; grid-template-columns: 97px 131px 1fr; align-items: center; margin-bottom: 7px; }
    .mode > span { text-align: right; }
    .mode ui-select { margin-left: 12px; width: 107px; }
    .mode i { width: 5px; height: 5px; margin-left: 24px; border-radius: 50%; background: #ddd; }
    .delta { gap: 1px; height: 30px; margin: 13px 0 0 23px; }
    .delta ui-icon { color: #aaa; }
    .scroll { width: 5px; height: 560px; margin: 12px 1px 0 2px; border-radius: 3px; background: #3f3f3f; }
  `;
  render() {
    var tabs = [["tools"], ["render", "gap"], ["output"], ["layers"], ["scene"], ["world", "red"], ["archive2", "gap"], ["object", "on gap"], ["wrench", "blue"], ["particles", "blue"], ["physics", "blue"], ["constraint", "blue"], ["mesh", "green"], ["shaded", "red"], ["checker", "red gap"]];
    var closed = ["関係", "コレクション", "インスタンス化", "モーションパス", "可視性", "ビューポート表示"];
    return `<div class="top"><ui-drop icon="props"></ui-drop><span class="s1"></span><ui-search></ui-search><span class="s2"></span><div class="group"><button aria-label="options"><ui-icon class="arrow14" name="down"></ui-icon></button></div></div>
    <div class="body">
      <nav>${tabs.map(([n, c]) => `<button class="${c || ""}" aria-label="${n}"><ui-icon name="${n}"></ui-icon></button>`).join("")}</nav>
      <main>
        <div class="row title"><ui-icon name="object"></ui-icon><span>Cube.003</span><ui-icon class="pin" name="pin"></ui-icon></div>
        <ui-datablock simple icon="object" value="Cube.003"></ui-datablock>
        <prop-panel open heading="トランスフォーム"><div class="space"></div>
          <vector-field label="位置" values="7.5 m,0 m,0 m"></vector-field>
          <vector-field label="回転" values="0°,0°,0°"></vector-field>
          <div class="mode"><span>モード</span><ui-select label="モード">XYZ オイ...</ui-select><i></i></div>
          <vector-field label="スケール" values="1.000,1.000,1.000"></vector-field>
          <button class="delta"><ui-icon name="right"></ui-icon>デルタトランスフォーム</button>
        </prop-panel>
        ${closed.map(h => `<prop-panel heading="${h}"></prop-panel>`).join("")}
      </main>
      <div class="scroll"></div>
    </div>`;
  }
}

class StatusBar extends UiElement {
  static css = `
    :host { display: flex; align-items: center; height: 26px; padding: 2px 15px 0 12px; box-sizing: border-box; color: #989898; }
    span { display: flex; align-items: center; gap: 11px; width: 281px; }
    em { margin-left: auto; font-style: normal; color: #808080; }
  `;
  render() {
    return `<span><ui-icon name="mouseL"></ui-icon>選択</span><span><ui-icon name="mouseM"></ui-icon>ビューをズーム</span><span><ui-icon name="mouseR"></ui-icon>投げ縄選択</span><em>4.0.1</em>`;
  }
}

class BlenderWindow extends UiElement {
  static css = `
    :host { display: grid; grid-template-rows: auto auto minmax(0, 1fr) auto; height: 100vh; min-width: 1500px; }
    .areas { display: grid; grid-template-columns: minmax(0, 1fr) 330px; gap: 3px; padding: 0 2px; min-height: 0; }
    .left, .right { display: grid; gap: 3px; min-height: 0; }
    .left { grid-template-rows: minmax(0, 1fr) 74px; }
    .right { grid-template-rows: 317px minmax(0, 1fr); }
  `;
  render() {
    return `<title-bar></title-bar><top-bar></top-bar>
    <div class="areas">
      <div class="left"><view-3d></view-3d><time-line></time-line></div>
      <div class="right"><outliner-panel></outliner-panel><properties-panel></properties-panel></div>
    </div>
    <status-bar></status-bar>`;
  }
}

var elements = {
  "ui-icon": UiIcon, "ui-drop": UiDrop, "ui-select": UiSelect, "ui-search": UiSearch, "ui-datablock": UiDatablock,
  "title-bar": TitleBar, "top-bar": TopBar, "scene-view": SceneView, "axis-gizmo": AxisGizmo, "tool-shelf": ToolShelf,
  "note-card": NoteCard, "view-3d": View3d, "time-line": TimeLine, "outliner-row": OutlinerRow, "outliner-panel": OutlinerPanel,
  "prop-panel": PropPanel, "vector-field": VectorField, "properties-panel": PropertiesPanel, "status-bar": StatusBar,
  "blender-window": BlenderWindow,
};
for (var name in elements) {
  window.customElements.define(name, elements[name]);
}
</script>
</body>
</html>
